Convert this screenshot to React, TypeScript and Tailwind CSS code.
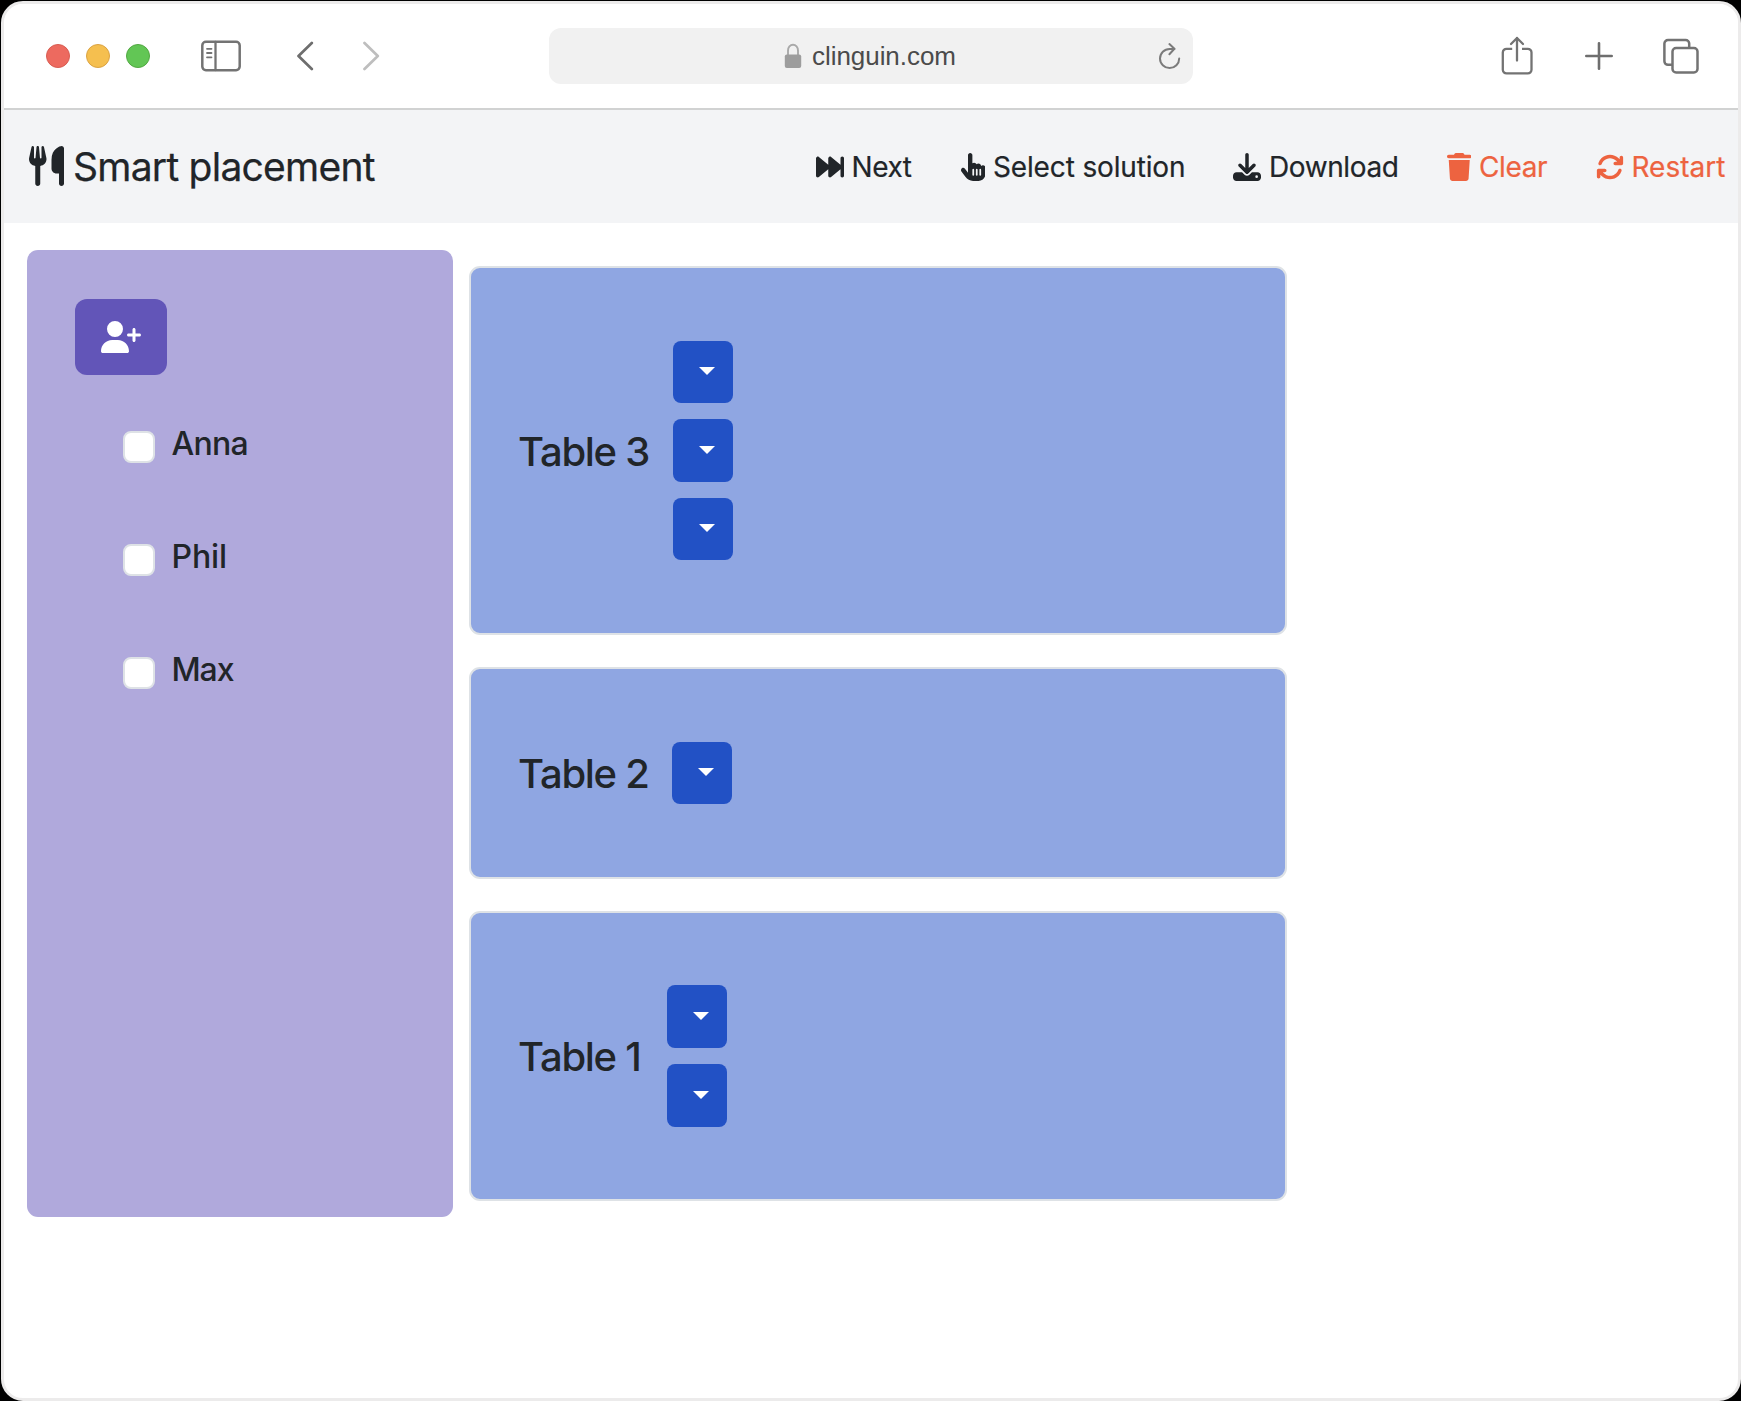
import React from "react";
import type { ReactNode } from "react";
import {
  FaArrowsRotate,
  FaDownload,
  FaForwardFast,
  FaHandPointer,
  FaTrash,
  FaUserPlus,
  FaUtensils,
} from "react-icons/fa6";

function TitleBar() {
  return (
    <header className="flex h-[106px] shrink-0 items-center border-b-2 border-[#d1d2d2] bg-white pl-[42px]">
      <div className="flex gap-4">
        <span className="size-6 rounded-full border border-[#d85d52] bg-[#ed6a5f]" />
        <span className="size-6 rounded-full border border-[#dba343] bg-[#f5bf4f]" />
        <span className="size-6 rounded-full border border-[#52a842] bg-[#62c655]" />
      </div>
      <svg className="ml-[51px] h-8 w-10 shrink-0" viewBox="0 0 40 32" fill="none" stroke="#737373" strokeLinecap="round">
        <rect x="1.3" y="1.8" width="37.4" height="28.4" rx="3.6" strokeWidth="2.5" />
        <path d="M14.5 2v28" strokeWidth="2.3" />
        <path d="M6 8.8h4.5M6 13h4.5M6 17.3h4.5" strokeWidth="1.8" />
      </svg>
      <svg className="ml-14 h-[30px] w-[18px] shrink-0" viewBox="0 0 18 30" fill="none" stroke="#6e6e6e" strokeWidth="2.7" strokeLinecap="round" strokeLinejoin="round">
        <path d="M14.8 2 1.5 15l13.3 13" />
      </svg>
      <svg className="ml-12 h-[30px] w-[18px] shrink-0" viewBox="0 0 18 30" fill="none" stroke="#bebebe" strokeWidth="2.7" strokeLinecap="round" strokeLinejoin="round">
        <path d="M1.5 2 14.8 15 1.5 28" />
      </svg>
      <div className="ml-[167.5px] flex h-14 w-[644px] shrink-0 items-center rounded-xl bg-[#f1f1f1] pl-[235px] pr-[11px]">
        <svg className="h-[26px] w-[18px] shrink-0" viewBox="0 0 18 26">
          <path d="M4 13V7.5a5 5.8 0 0 1 10 0V13" fill="none" stroke="#a9a9a9" strokeWidth="1.9" />
          <rect x="0.8" y="11.5" width="16.4" height="13.5" rx="2" fill="#9d9d9d" />
        </svg>
        <span className="ml-[10.5px] font-['Liberation_Sans',sans-serif] text-[26px] leading-8 tracking-[-0.05px] text-[#4b4b4b]">clinguin.com</span>
        <svg className="ml-auto h-7 w-6 shrink-0" viewBox="0 0 24 28" fill="none" stroke="#7b7b7b" strokeWidth="2" strokeLinecap="round" strokeLinejoin="round">
          <path d="M21.2 16.5a9.6 9.6 0 1 1-9.6-9.6h4.8" />
          <path d="M11.4 2.1 16.4 6.8 11.4 12.2" />
        </svg>
      </div>
      <svg className="-mt-px ml-[308px] h-10 w-8 shrink-0" viewBox="0 0 32 40" fill="none" stroke="#737373" strokeWidth="2.3" strokeLinecap="round" strokeLinejoin="round">
        <path d="M11.2 12.8H5.5a3.7 3.7 0 0 0-3.7 3.7v17.200a3.700 3.700 0 0 0 3.700 3.700h21.300a3.700 3.700 0 0 0 3.700-3.700V16.500a3.700 3.700 0 0 0-3.700-3.700H21" strokeLinecap="butt" />
        <path d="M16 24.500V2M10 8l6-6 6 6" />
      </svg>
      <svg className="ml-[52px] size-7 shrink-0" viewBox="0 0 28 28" fill="none" stroke="#6e6e6e" strokeWidth="2.6" strokeLinecap="round">
        <path d="M14 1.3v25.4M1.3 14h25.4" />
      </svg>
      <svg className="-mt-px ml-[50px] size-9 shrink-0" viewBox="0 0 36 36" fill="none" stroke="#737373" strokeWidth="2.5">
        <rect x="9.5" y="10" width="25" height="24.5" rx="3.6" />
        <path d="M9.5 26.800H5a3.600 3.600 0 0 1-3.600-3.600V5.600A3.600 3.600 0 0 1 5 2h17.600a3.600 3.600 0 0 1 3.600 3.600V10" />
      </svg>
    </header>
  );
}

function NavItem({ icon, label, className }: { icon: ReactNode; label: string; className: string }) {
  return (
    <a className={`flex shrink-0 items-center gap-2 whitespace-nowrap text-[28px] leading-10 [-webkit-text-stroke:0.2px] ${className}`}>
      {icon}
      <span>{label}</span>
    </a>
  );
}

function NavBar() {
  return (
    <nav className="flex h-[113px] shrink-0 items-center bg-[#f3f4f6] pl-[25px] text-[#212529]">
      <h1 className="flex w-[786.5px] shrink-0 items-center gap-[9px] text-[39px] leading-[48px] tracking-[-0.75px] [-webkit-text-stroke:0.25px]">
        <FaUtensils className="mb-[2px] h-10 w-[35px]" />
        <span className="whitespace-nowrap pt-px">Smart placement</span>
      </h1>
      <NavItem className="w-[145px] tracking-[-0.45px]" label="Next" icon={<FaForwardFast className="size-7" />} />
      <NavItem className="w-[272.5px] tracking-[-0.15px]" label="Select solution" icon={<FaHandPointer className="h-7 w-[24.5px]" />} />
      <NavItem className="w-[213.5px] tracking-[-0.4px]" label="Download" icon={<FaDownload className="size-7" />} />
      <NavItem className="w-[149px] tracking-[-0.4px] text-[#ed6340]" label="Clear" icon={<FaTrash className="h-7 w-[24.5px]" />} />
      <NavItem className="text-[#ed6340]" label="Restart" icon={<FaArrowsRotate className="size-7" />} />
    </nav>
  );
}

function Guest({ name, className }: { name: string; className: string }) {
  return (
    <label className="flex h-[113px] items-start pl-12">
      <input
        type="checkbox"
        className="mt-[2px] size-8 shrink-0 appearance-none rounded-lg border-2 border-[#dee2e6] bg-white"
      />
      <span className={`ml-[16.5px] text-[32px] font-medium leading-[30px] text-[#212529] ${className}`}>{name}</span>
    </label>
  );
}

function GuestPanel() {
  return (
    <aside className="h-[967.4px] w-[426px] shrink-0 rounded-[11px] bg-[#b0a9dc] px-[48.4px] pt-[48.5px]">
      <button className="flex h-[76px] w-[92.5px] items-center justify-center rounded-xl bg-[#6255b8] text-white">
        <FaUserPlus className="h-8 w-10" />
      </button>
      <div className="pt-[54px]">
        <Guest name="Anna" className="tracking-[-0.7px]" />
        <Guest name="Phil" className="tracking-[-0.1px]" />
        <Guest name="Max" className="tracking-[-1.1px]" />
      </div>
    </aside>
  );
}

function SeatDropdown() {
  return (
    <button className="flex h-[62.6px] w-[59.5px] shrink-0 items-start rounded-lg bg-[#2251c5] pl-[25.5px] pt-[26.5px]">
      <svg className="h-2 w-4" viewBox="0 0 16 8" fill="#fff">
        <path d="M0 0h16L8 8z" />
      </svg>
    </button>
  );
}

function TableCard({ name, seats, size, label }: { name: string; seats: number; size: string; label: string }) {
  return (
    <section className={`flex items-center rounded-[11px] border-2 border-[#dee2e6] bg-[#8fa6e2] pl-[47.5px] ${size}`}>
      <h2 className={`shrink-0 whitespace-nowrap pt-[2px] text-[40px] font-medium leading-[48px] tracking-[-1.3px] text-[#212529] ${label}`}>{name}</h2>
      <div className="flex flex-col gap-4">
        {Array.from({ length: seats }, (_, i) => (
          <SeatDropdown key={i} />
        ))}
      </div>
    </section>
  );
}

export default function App() {
  return (
    <div className="h-[1401px] w-[1741px] overflow-hidden bg-black pl-px pt-px font-[Inter,sans-serif]">
      <div className="flex h-[1400px] w-[1740px] flex-col overflow-hidden rounded-[22px] border-[3px] border-[#ecebeb] bg-white">
        <TitleBar />
        <NavBar />
        <main className="flex gap-4 pl-[22.6px] pt-[27px]">
          <GuestPanel />
          <div className="flex flex-col gap-8 pt-4">
            <TableCard name="Table 3" seats={3} size="h-[369px] w-[818.5px]" label="w-[155px]" />
            <TableCard name="Table 2" seats={1} size="h-[212px] w-[818.5px]" label="w-[154px]" />
            <TableCard name="Table 1" seats={2} size="h-[290px] w-[818.5px]" label="w-[149px]" />
          </div>
        </main>
      </div>
    </div>
  );
}
